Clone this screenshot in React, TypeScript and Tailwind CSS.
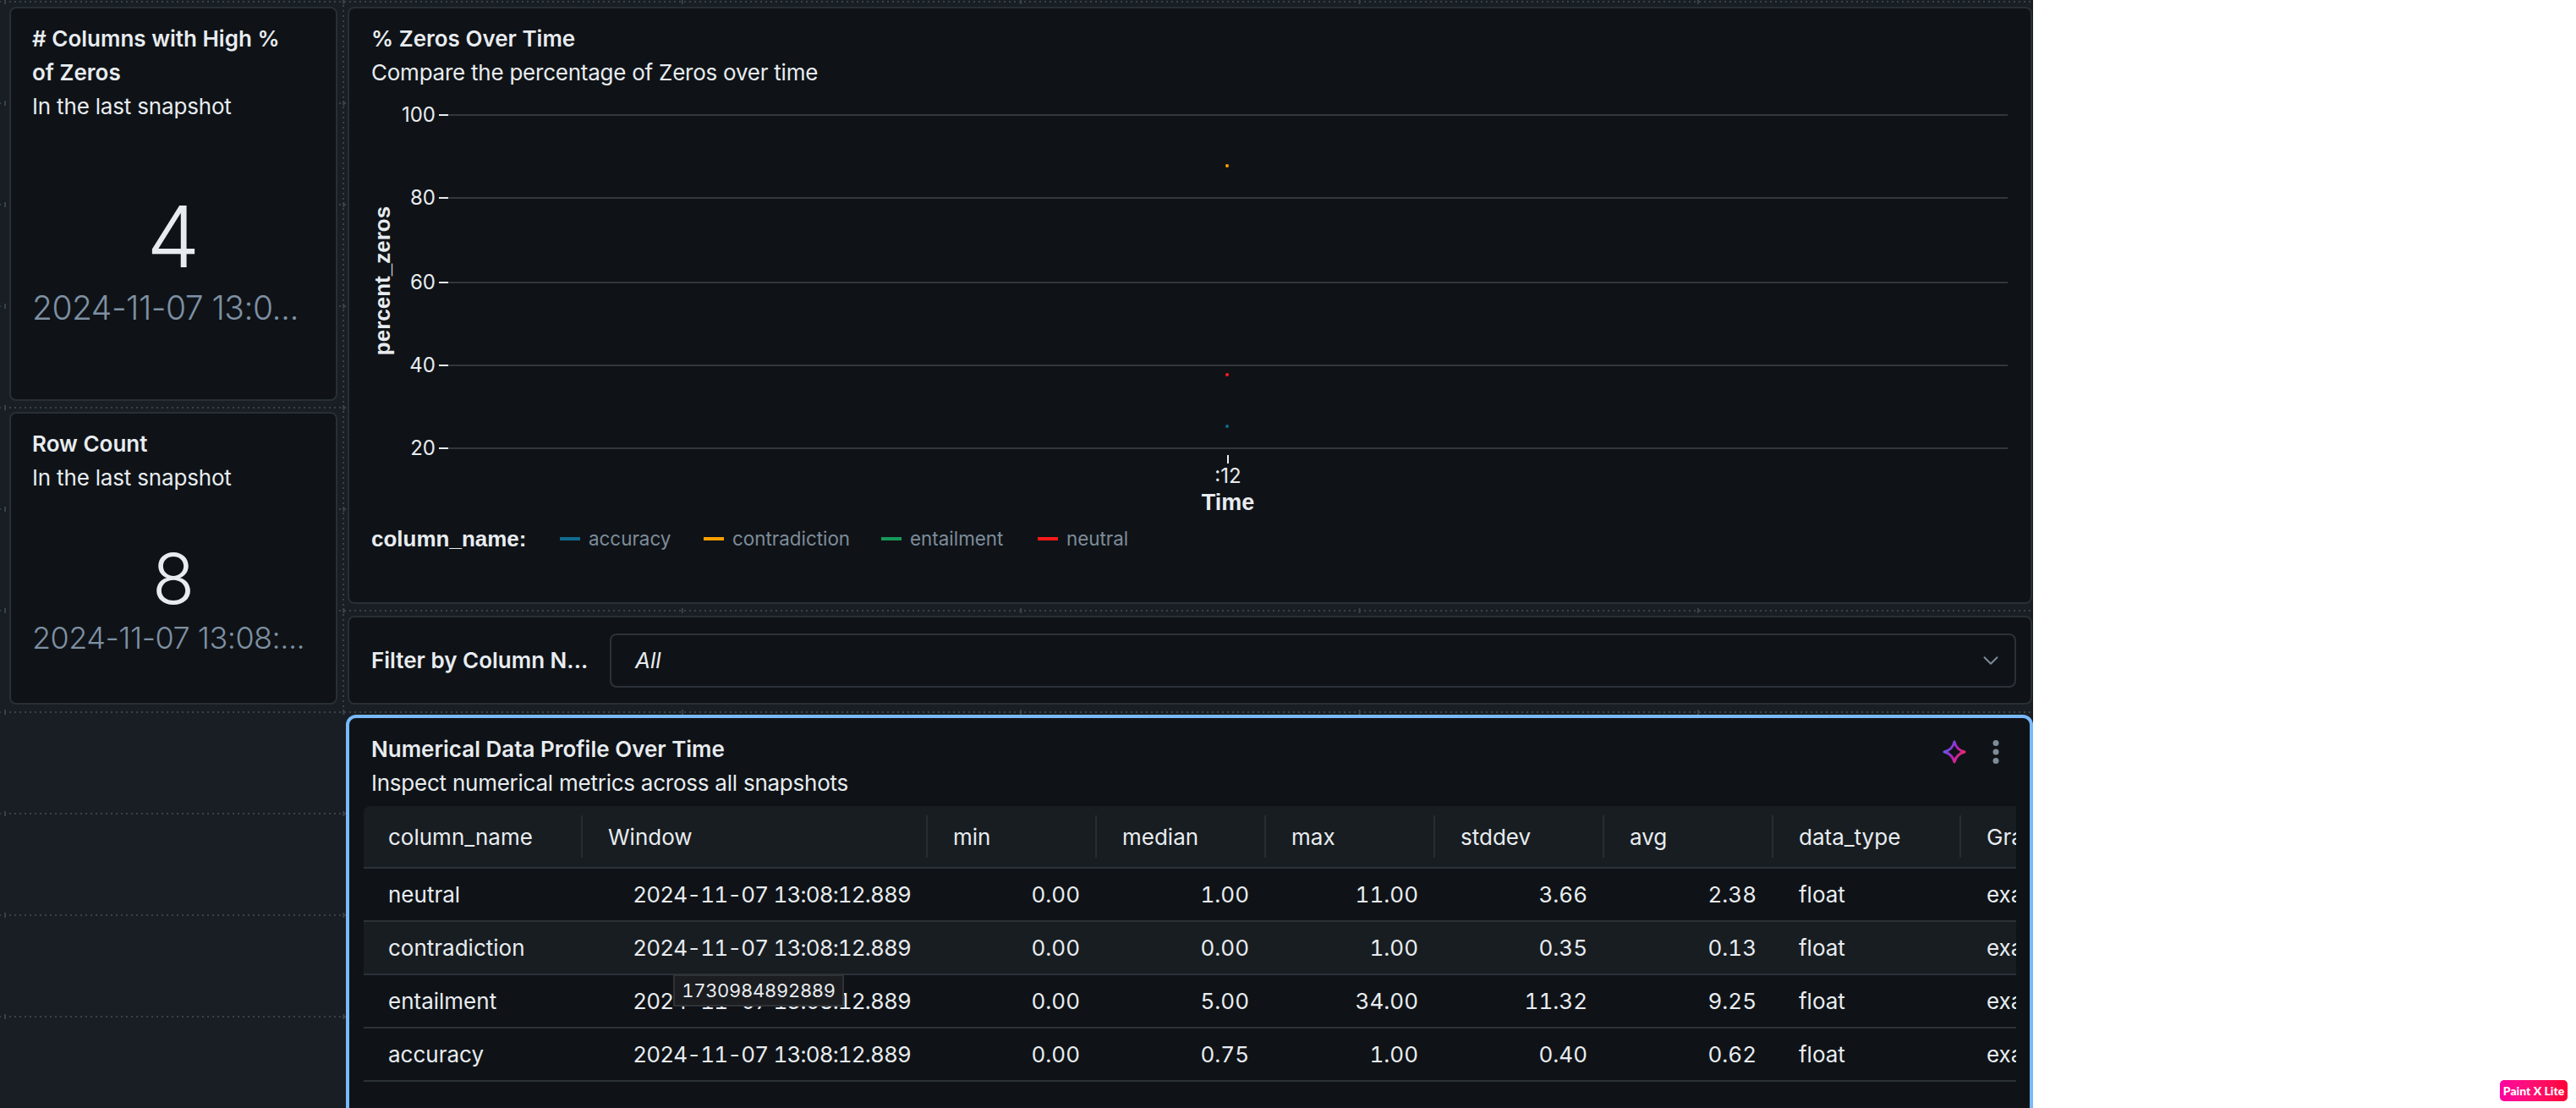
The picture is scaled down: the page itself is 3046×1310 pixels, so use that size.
import { ChevronDown } from "lucide-react";

const font = "font-['Inter','Liberation_Sans',sans-serif]";

const rows = [
  { name: "neutral", min: "0.00", median: "1.00", max: "11.00", stddev: "3.66", avg: "2.38", alt: false },
  { name: "contradiction", min: "0.00", median: "0.00", max: "1.00", stddev: "0.35", avg: "0.13", alt: true },
  { name: "entailment", min: "0.00", median: "5.00", max: "34.00", stddev: "11.32", avg: "9.25", alt: false },
  { name: "accuracy", min: "0.00", median: "0.75", max: "1.00", stddev: "0.40", avg: "0.62", alt: false },
];

const legend = [
  { label: "accuracy", color: "bg-[#126b8f]", width: "w-[170px]" },
  { label: "contradiction", color: "bg-[#ffa000]", width: "w-[210px]" },
  { label: "entailment", color: "bg-[#16995a]", width: "w-[185px]" },
  { label: "neutral", color: "bg-[#ff1a1a]", width: "w-[110px]" },
];

const ticks = [
  { label: "100", y: 136 },
  { label: "80", y: 234 },
  { label: "60", y: 334 },
  { label: "40", y: 432 },
  { label: "20", y: 530 },
];

function Counter({ title, value, date, valueSize, dateSize, bodyClass, className }: { title: string[]; value: string; date: string; valueSize: string; dateSize: string; bodyClass: string; className: string }) {
  return (
    <div className={`flex w-[388px] shrink-0 flex-col rounded-[8px] border-2 border-[#282f35] bg-[#0f1317] pl-[25px] pr-[10px] pt-[16px] ${className}`}>
      <div className="text-[26px] font-semibold leading-[40px] text-[#e8ecf0]">
        {title.map((t) => (
          <div key={t}>{t}</div>
        ))}
      </div>
      <div className="text-[26px] leading-[40px] tracking-[-0.18px] text-[#e8ecf0]">In the last snapshot</div>
      <div className={`flex flex-1 flex-col justify-center pr-[15px] ${bodyClass}`}>
        <div className={`text-center font-light text-[#e8ecf0] ${valueSize}`}>{value}</div>
        <div className={`whitespace-nowrap font-light tracking-[-0.5px] text-[#7e90a3] ${dateSize}`}>{date}</div>
      </div>
    </div>
  );
}

function Chart() {
  // svg uses page coordinates, the viewBox shifts them into the card
  return (
    <svg width="1984" height="510" className="absolute left-0 top-0" viewBox="413 106 1984 510">
      {ticks.map((t) => (
        <g key={t.label}>
          <line x1="530" x2="2374" y1={t.y} y2={t.y} stroke="#33373b" strokeWidth="2" />
          <line x1="519" x2="530" y1={t.y} y2={t.y} stroke="#e8ecf0" strokeWidth="2" />
          <text x="515" y={t.y + 8} textAnchor="end" fill="#e8ecf0" fontSize="24" fontFamily="Inter, sans-serif">
            {t.label}
          </text>
        </g>
      ))}
      <line x1="1452" x2="1452" y1="538" y2="548" stroke="#e8ecf0" strokeWidth="2" />
      <text x="1452" y="571" textAnchor="middle" fill="#e8ecf0" fontSize="24" fontFamily="Inter, sans-serif">:12</text>
      <text x="1452" y="603" textAnchor="middle" fill="#e8ecf0" fontSize="27" fontWeight="700" fontFamily="'Liberation Sans', sans-serif">Time</text>
      <text transform="translate(461 332) rotate(-90)" textAnchor="middle" fill="#e8ecf0" fontSize="26" fontWeight="700" fontFamily="'Liberation Sans', sans-serif">percent_zeros</text>
      <circle cx="1451" cy="196" r="2" fill="#ffa000" />
      <circle cx="1451" cy="443" r="2" fill="#ff1a1a" />
      <circle cx="1451" cy="504" r="2" fill="#126b8f" />
    </svg>
  );
}

const headers = [
  { label: "column_name", w: "w-[259px]" },
  { label: "Window", w: "w-[408px]" },
  { label: "min", w: "w-[200px]" },
  { label: "median", w: "w-[200px]" },
  { label: "max", w: "w-[200px]" },
  { label: "stddev", w: "w-[200px]" },
  { label: "avg", w: "w-[200px]" },
  { label: "data_type", w: "w-[222px]" },
  { label: "Gradient", w: "w-[200px]" },
];

function DataTable() {
  return (
    <div className="relative ml-[17px] mr-[16px] mt-[7px] overflow-hidden text-[26px] tabular-nums text-[#e8ecf0]">
      <div className="flex h-[74px] w-max items-center rounded-t-[8px] border-b-2 border-[#2a3238] bg-[#181d21]">
        {headers.map((h, i) => (
          <div key={h.label} className={`flex h-[50px] items-center ${i === 0 ? "pl-[29px]" : "pl-[30px]"} ${h.w} ${i < headers.length - 1 ? "border-r-2 border-[#262d33]" : ""}`}>
            {h.label}
          </div>
        ))}
      </div>
      {rows.map((r) => (
        <div key={r.name} className={`flex h-[63px] w-max items-center border-b-2 border-[#2a3238] ${r.alt ? "bg-[#181d21]" : ""}`}>
          <div className="w-[259px] pl-[29px]">{r.name}</div>
          <div className="w-[408px] pr-[20px] text-right tracking-[-0.85px]">2024-11-07 13:08:12.889</div>
          <div className="w-[200px] pr-[20px] text-right">{r.min}</div>
          <div className="w-[200px] pr-[20px] text-right">{r.median}</div>
          <div className="w-[200px] pr-[20px] text-right">{r.max}</div>
          <div className="w-[200px] pr-[20px] text-right">{r.stddev}</div>
          <div className="w-[200px] pr-[20px] text-right">{r.avg}</div>
          <div className="w-[222px] pl-[30px]">float</div>
          <div className="w-[200px] pl-[30px]">example</div>
        </div>
      ))}
      <div className="absolute left-[366px] top-[199px] flex h-[38px] w-[202px] items-center justify-center border-2 border-[#2f3337] bg-[#1b1d20] text-[22px] tracking-[-0.3px] text-[#e8ecf0]">
        1730984892889
      </div>
    </div>
  );
}

export default function App() {
  return (
    <div className={`relative h-[1310px] w-[3046px] overflow-hidden bg-white ${font}`}>
      <div className="relative flex h-full w-[2404px] gap-[12px] bg-[#181e23] bg-[radial-gradient(circle_at_1px_1px,#3a4248_1px,transparent_1.5px),radial-gradient(1px_4px_at_1px_4px,#3a4248_100%,transparent_100%)] bg-[length:6px_120px,400.4px_120px] bg-[position:5px_1px,5px_-2px] pl-[11px] pt-[8px]">
        <div className="absolute left-[405px] top-0 h-[842px] w-[2px] bg-[radial-gradient(circle_at_1px_1px,#3a4248_1px,transparent_1.5px)] bg-[length:2px_6px]" />
        <div className="relative flex flex-col gap-[13px]">
          <Counter title={["# Columns with High %", "of Zeros"]} value="4" date="2024-11-07 13:0..." valueSize="text-[100px] leading-[110px]" dateSize="mt-[4px] text-[39px] leading-[50px]" bodyClass="pb-[4px]" className="h-[466px]" />
          <Counter title={["Row Count"]} value="8" date="2024-11-07 13:08:..." valueSize="text-[82px] leading-[92px]" dateSize="text-[36px] leading-[46px]" bodyClass="" className="h-[346px]" />
        </div>
        <div className="relative flex w-[1992px] flex-col">
          <div className="relative h-[706px] shrink-0 rounded-[8px] border-2 border-[#282f35] bg-[#0f1317] px-[26px] pt-[16px] text-[26px] leading-[40px] text-[#e8ecf0]">
            <div className="font-semibold">% Zeros Over Time</div>
            <div className="tracking-[-0.24px]">Compare the percentage of Zeros over time</div>
            <div className="relative h-[511px]">
              <div className="absolute left-[-26px] top-0">
                <Chart />
              </div>
            </div>
            <div className="flex items-center">
              <div className="w-[223px] font-['Liberation_Sans',sans-serif] font-bold">column_name:</div>
              {legend.map((l) => (
                <div key={l.label} className={`flex items-center gap-[10px] text-[22.4px] text-[#7e8c9a] ${l.width}`}>
                  <span className={`h-[4px] w-[24px] ${l.color}`} />
                  {l.label}
                </div>
              ))}
            </div>
          </div>
          <div className="mt-[14px] flex h-[105px] shrink-0 items-center gap-[26px] rounded-[8px] border-2 border-[#282f35] bg-[#0f1317] pl-[26px] pr-[17px] text-[26px] text-[#e8ecf0]">
            <div className="w-[256px] whitespace-nowrap font-semibold">Filter by Column N...</div>
            <div className="flex h-[64px] flex-1 items-center justify-between rounded-[8px] border-2 border-[#2b3238] pl-[28px] pr-[13px]">
              <span className="italic">All</span>
              <ChevronDown size={30} strokeWidth={1.5} className="text-[#7e8c9a]" />
            </div>
          </div>
          <div className="mt-[12px] h-[600px] w-[1995px] shrink-0 -translate-x-[2px] rounded-[12px] border-[4px] border-[#78b9f9] bg-[#0f1317] pt-[17px]">
            <div className="flex items-start justify-between px-[26px]">
              <div className="text-[26px] leading-[40px] text-[#e8ecf0]">
                <div className="font-semibold">Numerical Data Profile Over Time</div>
                <div className="tracking-[-0.24px]">Inspect numerical metrics across all snapshots</div>
              </div>
              <div className="flex items-center gap-[31px] pr-[10px] pt-[9px]">
                <svg width="28" height="28" viewBox="0 0 28 28" fill="none">
                  <defs>
                    <linearGradient id="spark" x1="0" y1="0.2" x2="1" y2="0.8">
                      <stop offset="0" stopColor="#4a6cf0" />
                      <stop offset="0.5" stopColor="#b01fc0" />
                      <stop offset="1" stopColor="#ff2f4f" />
                    </linearGradient>
                  </defs>
                  <path d="M14 2 C15.5 8 20 12.5 26 14 C20 15.5 15.5 20 14 26 C12.5 20 8 15.5 2 14 C8 12.5 12.5 8 14 2 Z" stroke="url(#spark)" strokeWidth="3" strokeLinejoin="round" />
                </svg>
                <svg width="8" height="28" viewBox="0 0 8 28" fill="#7e8c9a">
                  <circle cx="4" cy="3.5" r="3.5" />
                  <circle cx="4" cy="14" r="3.5" />
                  <circle cx="4" cy="24.5" r="3.5" />
                </svg>
              </div>
            </div>
            <DataTable />
          </div>
        </div>
      </div>
      <div className="absolute left-[2956px] top-[1277px] flex h-[25px] w-[80px] items-center justify-center rounded-[5px] bg-gradient-to-r from-[#ff00a0] to-[#ff0033] font-['Lato',sans-serif] text-[14px] font-black text-white">
        Paint X Lite
      </div>
    </div>
  );
}
